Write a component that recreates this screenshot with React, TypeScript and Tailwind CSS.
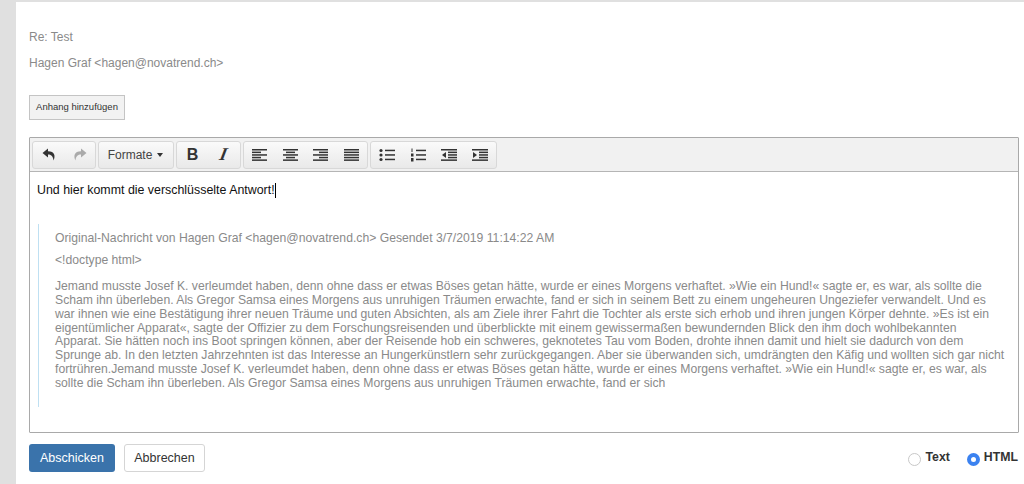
const lines = [
  "Jemand musste Josef K. verleumdet haben, denn ohne dass er etwas Böses getan hätte, wurde er eines Morgens verhaftet. »Wie ein Hund!« sagte er, es war, als sollte die",
  "Scham ihn überleben. Als Gregor Samsa eines Morgens aus unruhigen Träumen erwachte, fand er sich in seinem Bett zu einem ungeheuren Ungeziefer verwandelt. Und es",
  "war ihnen wie eine Bestätigung ihrer neuen Träume und guten Absichten, als am Ziele ihrer Fahrt die Tochter als erste sich erhob und ihren jungen Körper dehnte. »Es ist ein",
  "eigentümlicher Apparat«, sagte der Offizier zu dem Forschungsreisenden und überblickte mit einem gewissermaßen bewundernden Blick den ihm doch wohlbekannten",
  "Apparat. Sie hätten noch ins Boot springen können, aber der Reisende hob ein schweres, geknotetes Tau vom Boden, drohte ihnen damit und hielt sie dadurch von dem",
  "Sprunge ab. In den letzten Jahrzehnten ist das Interesse an Hungerkünstlern sehr zurückgegangen. Aber sie überwanden sich, umdrängten den Käfig und wollten sich gar nicht",
  "fortrühren.Jemand musste Josef K. verleumdet haben, denn ohne dass er etwas Böses getan hätte, wurde er eines Morgens verhaftet. »Wie ein Hund!« sagte er, es war, als",
  "sollte die Scham ihn überleben. Als Gregor Samsa eines Morgens aus unruhigen Träumen erwachte, fand er sich",
]

// x, width of each bar in a text-align icon
const alignIcons = [
  [[0, 15], [0, 9], [0, 15], [0, 9], [0, 15]],
  [[0, 15], [3, 9], [0, 15], [3, 9], [0, 15]],
  [[0, 15], [6, 9], [0, 15], [6, 9], [0, 15]],
  [[0, 15], [0, 15], [0, 15], [0, 15], [0, 15]],
]

function Bars({ rows }: { rows: number[][] }) {
  return (
    <svg width="15" height="14" viewBox="0 0 15 14" fill="#333">
      {rows.map(([x, w], i) => (
        <rect key={i} x={x} y={1 + i * 2.6} width={w} height="1.5" />
      ))}
    </svg>
  )
}

function Btn({ children, className = "" }: { children: React.ReactNode; className?: string }) {
  return <div className={`flex items-center justify-center w-[31px] h-full ${className}`}>{children}</div>
}

function Group({ children, className = "" }: { children: React.ReactNode; className?: string }) {
  return (
    <div className={`flex items-center h-[28px] rounded-[3px] border border-[#d8d8d8] bg-gradient-to-b from-[#fafafa] to-[#e9e9e9] ${className}`}>
      {children}
    </div>
  )
}

function Undo({ fill, flip }: { fill: string; flip?: boolean }) {
  return (
    <svg width="14" height="13" viewBox="0 0 14 13" fill={fill} className={flip ? "-scale-x-100" : ""}>
      <path d="M6 0.5 L0.5 5 L6 9.5 V6.6 C9 6.6 10.8 8 11.6 12.5 C13.6 8 12.8 3.4 6 3.3 Z" />
    </svg>
  )
}

function Radio({ checked, label }: { checked?: boolean; label: string }) {
  return (
    <div className="flex items-start gap-[4px]">
      {checked ? (
        <span className="mt-[3px] flex items-center justify-center w-[13px] h-[13px] rounded-full bg-[#3b82f0]">
          <span className="w-[5px] h-[5px] rounded-full bg-white" />
        </span>
      ) : (
        <span className="mt-[3px] w-[13px] h-[13px] rounded-full border border-[#c8c8c8] bg-white" />
      )}
      <span className="text-[12.3px] leading-[14px] font-bold text-[#333]">{label}</span>
    </div>
  )
}

export default function App() {
  return (
    <div className="h-[484px] overflow-hidden bg-[#e0e0e0] pt-[2px] pl-[16px] font-['Liberation_Sans',Arial,sans-serif]">
      <div className="h-full bg-white pl-[13px] pr-[5px]">
        <p className="pt-[28px] text-[12px] leading-[14px] text-[#8a8a8a]">Re: Test</p>
        <p className="mt-[12px] text-[12px] leading-[14px] text-[#8a8a8a]">Hagen Graf &lt;hagen@novatrend.ch&gt;</p>

        <button className="mt-[25px] block h-[25px] w-[96px] border border-[#c4c4c4] bg-[#f2f2f2] text-[9.5px] text-[#333]">
          Anhang hinzufügen
        </button>

        <div className="mt-[17px] h-[296px] border border-[#a9a9a9] rounded-[1px] flex flex-col">
          <div className="flex items-center gap-[2px] h-[34px] shrink-0 pl-[2px] border-b border-[#b5b5b5] bg-[#f1f1f1]">
            <Group className="w-[64px]">
              <Btn><Undo fill="#333" /></Btn>
              <Btn><Undo fill="#aaa" flip /></Btn>
            </Group>
            <Group className="w-[76px] justify-center gap-[5px] pr-[1px] text-[12px] text-[#444]">
              <span>Formate</span>
              <span className="w-0 h-0 border-x-[3px] border-x-transparent border-t-[4px] border-t-[#333]" />
            </Group>
            <Group className="w-[65px]">
              <Btn><span className="text-[16px] font-bold text-[#333]">B</span></Btn>
              <Btn><span className="inline-block -skew-x-12 text-[18px] font-bold italic font-['Liberation_Serif',serif] text-[#333]">I</span></Btn>
            </Group>
            <Group className="w-[125px]">
              {alignIcons.map((rows, i) => (
                <Btn key={i}><Bars rows={rows} /></Btn>
              ))}
            </Group>
            <Group className="w-[127px]">
              <Btn>
                <svg width="16" height="14" viewBox="0 0 16 14" fill="#333">
                  <circle cx="2" cy="2.5" r="1.6" /><circle cx="2" cy="7" r="1.6" /><circle cx="2" cy="11.5" r="1.6" />
                  <rect x="6" y="1.7" width="10" height="1.5" /><rect x="6" y="6.2" width="10" height="1.5" /><rect x="6" y="10.7" width="10" height="1.5" />
                </svg>
              </Btn>
              <Btn>
                <svg width="16" height="14" viewBox="0 0 16 14" fill="#333">
                  <rect x="1.5" y="0.5" width="1" height="3.5" /><rect x="1" y="5.5" width="2.5" height="3" /><rect x="1" y="10" width="2.5" height="3.5" />
                  <rect x="6" y="1.7" width="10" height="1.5" /><rect x="6" y="6.2" width="10" height="1.5" /><rect x="6" y="10.7" width="10" height="1.5" />
                </svg>
              </Btn>
              <Btn>
                <svg width="16" height="14" viewBox="0 0 16 14" fill="#333">
                  <rect x="0" y="1" width="16" height="1.5" /><rect x="7" y="3.6" width="9" height="1.5" /><rect x="7" y="6.2" width="9" height="1.5" /><rect x="7" y="8.8" width="9" height="1.5" /><rect x="0" y="11.4" width="16" height="1.5" />
                  <path d="M5 4 V10 L1 7 Z" />
                </svg>
              </Btn>
              <Btn>
                <svg width="16" height="14" viewBox="0 0 16 14" fill="#333">
                  <rect x="0" y="1" width="16" height="1.5" /><rect x="7" y="3.6" width="9" height="1.5" /><rect x="7" y="6.2" width="9" height="1.5" /><rect x="7" y="8.8" width="9" height="1.5" /><rect x="0" y="11.4" width="16" height="1.5" />
                  <path d="M1 4 V10 L5 7 Z" />
                </svg>
              </Btn>
            </Group>
          </div>

          <div className="flex-1 pl-[7px] pt-[11px]">
            <p className="text-[12.4px] leading-[15px] text-[#111] flex items-center">
              Und hier kommt die verschlüsselte Antwort!
              <span className="inline-block w-px h-[15px] bg-black" />
            </p>
            <div className="mt-[26px] ml-[1px] h-[183px] border-l border-[#bfe0f2] pl-[16px] text-[12.2px] leading-[14px] text-[#8a8a8a]">
              <p className="pt-[7px]">Original-Nachricht von Hagen Graf &lt;hagen@novatrend.ch&gt; Gesendet 3/7/2019 11:14:22 AM</p>
              <p className="mt-[8px]">&lt;!doctype html&gt;</p>
              <p className="mt-[13px] whitespace-nowrap">
                {lines.map((l, i) => (
                  <span key={i} className="block leading-[13.85px]">{l}</span>
                ))}
              </p>
            </div>
          </div>
        </div>

        <div className="mt-[11px] flex items-start">
          <button className="h-[28px] w-[86px] rounded-[3px] bg-[#3a73ab] text-[12.5px] text-white">Abschicken</button>
          <button className="ml-[9px] h-[28px] w-[81px] rounded-[3px] border border-[#d5d5d5] bg-white text-[12.5px] text-[#333]">Abbrechen</button>
          <div className="ml-auto flex gap-[17px] pt-[6px] pr-[1px]">
            <Radio label="Text" />
            <Radio checked label="HTML" />
          </div>
        </div>
      </div>
    </div>
  )
}
